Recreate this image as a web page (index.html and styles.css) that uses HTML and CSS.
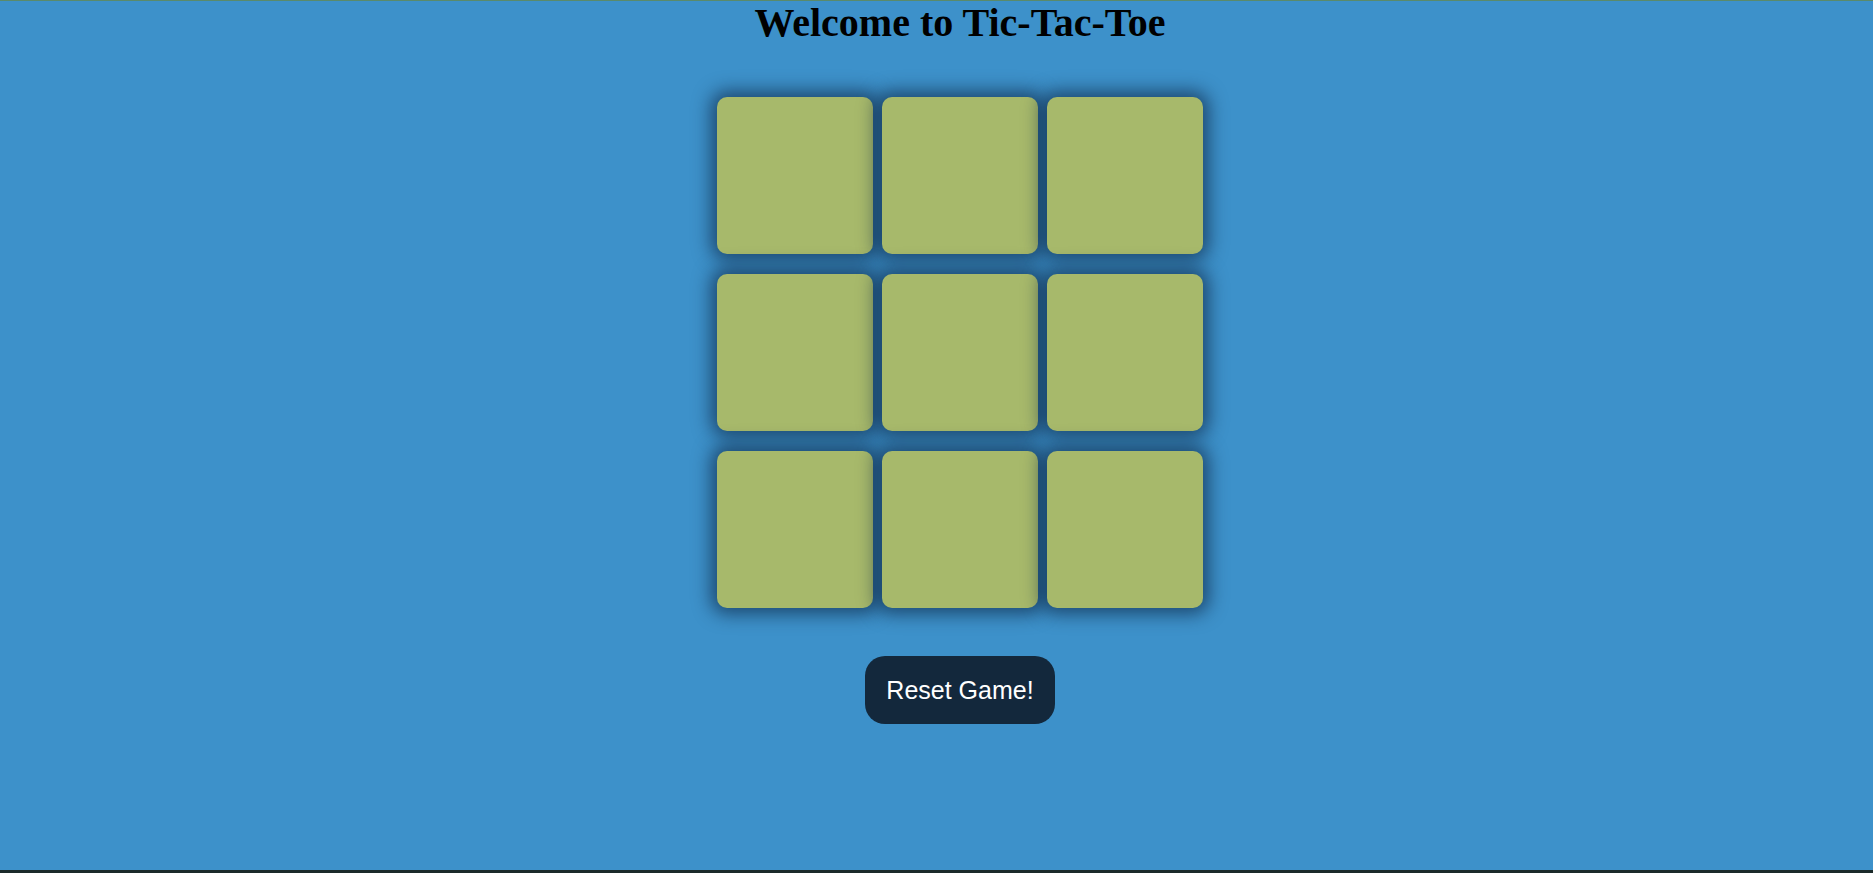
FILE: index.html
```html
<!DOCTYPE html>
<html>
<head>
<meta charset="utf-8">
<title>Tic-Tac-Toe</title>
<link rel="stylesheet" href="styles.css">
</head>
<body>
<div class="page">
  <h1 class="title">Welcome to Tic-Tac-Toe</h1>
  <div class="board">
    <div class="cell"></div>
    <div class="cell"></div>
    <div class="cell"></div>
    <div class="cell"></div>
    <div class="cell"></div>
    <div class="cell"></div>
    <div class="cell"></div>
    <div class="cell"></div>
    <div class="cell"></div>
  </div>
  <button class="reset">Reset Game!</button>
</div>
</body>
</html>
```

FILE: styles.css
```css
html, body {
  margin: 0;
  padding: 0;
  height: 100%;
  overflow: hidden;
}
body {
  background: #1b2a2a;
}
.page {
  box-sizing: border-box;
  height: 870px;
  background: #3d91ca;
  border-top: 1px solid #5a8a6a;
  padding-left: 47px;
  display: flex;
  flex-direction: column;
  align-items: center;
}
.title {
  margin: 0;
  font-family: "Liberation Serif", "Times New Roman", serif;
  font-weight: bold;
  font-size: 40px;
  line-height: 44px;
  color: #000;
}
.board {
  margin-top: 52px;
  display: grid;
  grid-template-columns: repeat(3, 156px);
  grid-auto-rows: 157px;
  column-gap: 9px;
  row-gap: 20px;
}
.cell {
  background: #a7b96b;
  border-radius: 10px;
  box-shadow: 0 0 18px 6px rgba(12, 35, 65, 0.65);
}
.reset {
  margin-top: 48px;
  background: #13283c;
  color: #fff;
  border: none;
  border-radius: 20px;
  font-family: "Liberation Sans", Arial, sans-serif;
  font-size: 25px;
  line-height: 28px;
  padding: 20px 21px;
  cursor: pointer;
}
```
